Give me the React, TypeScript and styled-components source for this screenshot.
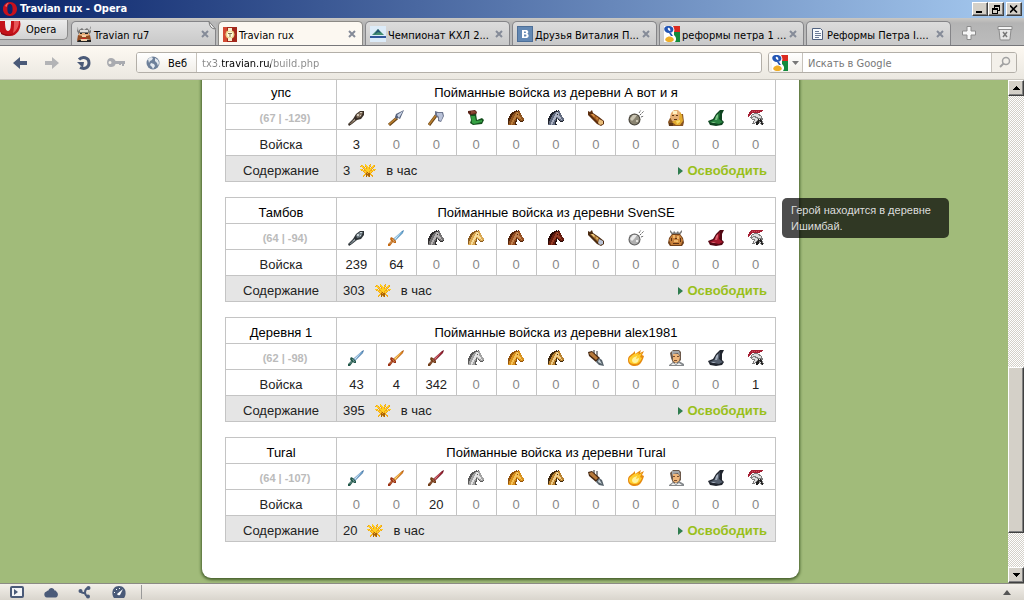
import React from "react";
import styled, { createGlobalStyle } from "styled-components";

const uiFont = `"DejaVu Sans Condensed", "DejaVu Sans", sans-serif`;
const pageFont = `"Liberation Sans", Arial, sans-serif`;

const GlobalStyle = createGlobalStyle`
  * { box-sizing: border-box; }
  body { margin: 0; font-family: ${uiFont}; font-size: 11px; color: #000; }
  button, input { font: inherit; color: inherit; margin: 0; }
  button { padding: 0; border: 0; background: none; display: flex; align-items: center; justify-content: center; }
  svg { display: block; flex: none; }
`;

const Window = styled.div`
  display: flex;
  flex-direction: column;
  height: 100vh;
  overflow: hidden;
`;

/* ---------- title bar ---------- */

const TitleBar = styled.header`
  display: flex;
  align-items: center;
  flex: none;
  height: 18px;
  padding: 0 2px 0 3px;
  background: linear-gradient(90deg, #0a246a, #a6caf0);
`;

const WindowTitle = styled.h1`
  flex: 1;
  margin: 0 0 0 3px;
  color: #fff;
  font-size: 11px;
  line-height: 18px;
  font-weight: bold;
`;

const ClassicButton = styled.button<{ $gap?: boolean }>`
  flex: none;
  width: 16px;
  height: 14px;
  margin-left: ${(p) => (p.$gap ? 2 : 0)}px;
  background: #d4d0c8;
  border: 1px solid;
  border-color: #fff #404040 #404040 #fff;
  box-shadow: inset -1px -1px #808080;
`;

/* ---------- tab strip ---------- */

const TabBar = styled.nav`
  display: flex;
  align-items: flex-end;
  flex: none;
  height: 28px;
  border-bottom: 1px solid #77777a;
  background: linear-gradient(#cac8c4, #b4b4b4 5px, #bcbcbc);
`;

const MenuButton = styled.button`
  flex: none;
  align-self: flex-start;
  width: 68px;
  height: 20px;
  margin: 2px 3px 0 0;
  gap: 4px;
  justify-content: flex-start;
  overflow: hidden;
  border: 1px solid #8a8a8a;
  border-width: 0 1px 1px 0;
  border-radius: 0 0 5px 0;
  background: linear-gradient(#ececec, #d2d2d2);
`;

const TabList = styled.div`
  display: flex;
  flex: 0 1 880px;
  min-width: 0;
  gap: 2px;
`;

const TabItem = styled.div<{ $active?: boolean }>`
  position: relative;
  display: flex;
  align-items: center;
  flex: 1 1 0;
  min-width: 0;
  height: 24px;
  padding: 1px 6px 0 4px;
  margin-bottom: ${(p) => (p.$active ? -1 : 0)}px;
  border: 1px solid ${(p) => (p.$active ? "#8c8a86" : "#858588")};
  border-bottom: 0;
  border-radius: 5px 5px 0 0;
  background: ${(p) => (p.$active ? "#fcf8f1" : "linear-gradient(#dcdcdc, #c9c9c9)")};
`;

const TabLabel = styled.button`
  flex: 1;
  min-width: 0;
  height: 23px;
  gap: 2px;
  justify-content: flex-start;
  white-space: nowrap;
`;

const TabText = styled.span`
  padding-top: 2px;
`;

const TabFold = styled.svg`
  position: absolute;
  top: -1px;
  right: -1px;
`;

const StripButton = styled.button`
  flex: none;
  width: 36px;
  height: 24px;
`;

/* ---------- toolbar ---------- */

const Toolbar = styled.div`
  display: flex;
  align-items: center;
  flex: none;
  height: 34px;
  padding: 0 7px 0 4px;
  border-bottom: 1px solid #c9c6bf;
  background: linear-gradient(#fdf9f2, #ebe8e1);
`;

const ToolButton = styled.button`
  flex: none;
  width: 32px;
  height: 24px;
`;

const Field = styled.div<{ $width?: number }>`
  display: flex;
  flex: ${(p) => (p.$width ? `0 1 ${p.$width}px` : "1 1 0")};
  min-width: 0;
  height: 21px;
  margin-left: ${(p) => (p.$width ? 6 : 4)}px;
  border: 1px solid #b3afa8;
  border-radius: 3px;
  background: #fff;
  overflow: hidden;
`;

const FieldButton = styled.button<{ $width: number; $gap?: number; $end?: boolean }>`
  flex: none;
  width: ${(p) => p.$width}px;
  gap: ${(p) => p.$gap ?? 0}px;
  border: 0 solid #c6c2bb;
  border-width: ${(p) => (p.$end ? "0 0 0 1px" : "0 1px 0 0")};
  background: ${(p) => (p.$end ? "#f3f0ea" : "linear-gradient(#fff, #f1eee8)")};
`;

const TextInput = styled.input`
  flex: 1;
  min-width: 0;
  padding: 2px 5px 0;
  border: 0;
  outline: 0;
  background: transparent;
  &::placeholder { color: #777; opacity: 1; }
`;

/* The host name is black, the rest of the address is grey. */
const AddressInput = styled(TextInput)`
  color: #000;
  -webkit-text-fill-color: transparent;
  background: linear-gradient(90deg, #888 25px, #000 25px, #000 74px, #888 74px);
  -webkit-background-clip: text;
  background-clip: text;
`;

/* ---------- page ---------- */

const Body = styled.div`
  display: flex;
  flex: 1;
  min-height: 0;
`;

const Viewport = styled.main`
  position: relative;
  display: flex;
  flex-direction: column;
  justify-content: flex-end;
  align-items: center;
  flex: 1;
  min-width: 0;
  padding: 0 7px 5px 0;
  overflow: hidden;
  background: #a1bb7a;
`;

const Panel = styled.section`
  display: flex;
  flex-direction: column;
  gap: 15px;
  width: 597px;
  max-width: 100%;
  padding: 24px 23px 36px;
  border-radius: 0 0 9px 9px;
  background: #fff;
  box-shadow: 0 1px 3px 1px #46602c;
`;

const TroopTable = styled.table`
  width: 100%;
  table-layout: fixed;
  border-collapse: collapse;
  font-family: ${pageFont};
  font-size: 13px;
  line-height: 16px;
  color: #222;
`;

const VillageCol = styled.col`
  width: 111px;
`;

const Cell = styled.td<{ $muted?: boolean }>`
  height: 26px;
  padding: 5px 0 0;
  border: 1px solid #c4c4c4;
  text-align: center;
  font-weight: normal;
  color: ${(p) => (p.$muted ? "#888" : "inherit")};
`;

const HeadCell = styled(Cell).attrs({ as: "th" })`
  color: #000;
`;

const IconCell = styled(Cell)`
  padding: 3px 0 0;
  svg { margin: 0 auto; }
`;

const Coordinates = styled(Cell)`
  padding: 3px 0 0 8px;
  font-size: 11px;
  font-weight: bold;
  color: #bbb;
`;

const UpkeepRow = styled.tr`
  background: #e5e5e5;
`;

const Upkeep = styled.div`
  display: flex;
  align-items: center;
  gap: 10px;
  padding: 0 8px 0 6px;
`;

const ReleaseLink = styled.a`
  display: flex;
  align-items: center;
  gap: 4px;
  margin-left: auto;
  font-weight: bold;
  color: #99c01a;
  text-decoration: none;
`;

const Tooltip = styled.div`
  position: absolute;
  top: 118px;
  right: 59px;
  width: 167px;
  padding: 4px 9px;
  border-radius: 5px;
  background: rgba(0, 0, 0, 0.7);
  color: #ddd;
  font-family: ${pageFont};
  font-size: 11px;
  line-height: 16px;
`;

/* ---------- scroll bar ---------- */

const ScrollBar = styled.div`
  display: flex;
  flex-direction: column;
  flex: none;
  width: 16px;
  background: repeating-conic-gradient(#d4d0c8 0 25%, #fff 0 50%) 0 0 / 2px 2px;
`;

const ScrollButton = styled(ClassicButton)`
  height: 16px;
`;

const ScrollSpace = styled.div<{ $share: number }>`
  flex: ${(p) => p.$share} 1 0;
`;

const Thumb = styled.div`
  flex: 165 1 0;
  border: 1px solid;
  border-color: #fff #404040 #404040 #fff;
  background: #d4d0c8;
  box-shadow: inset -1px -1px #808080;
`;

/* ---------- status bar ---------- */

const StatusBar = styled.footer`
  display: flex;
  align-items: center;
  flex: none;
  height: 17px;
  border-top: 1px solid #8b8b84;
  background: linear-gradient(#f3f0ea, #d9d5cd);
`;

const StatusButton = styled.button`
  flex: none;
  width: 34px;
  height: 16px;
`;

const StatusDivider = styled.span`
  width: 1px;
  height: 14px;
  margin: 0 auto 0 5px;
  background: #999;
`;

/* ---------- drawings: browser ---------- */

const OperaLogo = () => (
  <svg width="14" height="16" viewBox="0 0 14 16">
    <path fillRule="evenodd" fill="#c8101c" d="M7 1C3 1 0 4 0 8s3 7 7 7 7-3 7-7-3-7-7-7zm0 2c2 0 2.600 2.500 2.600 5S9 13 7 13 4.400 10.500 4.400 8 5 3 7 3z" />
    <path fill="#ef6a6a" d="M2 5c1-2 2-3 4-3.300C4.500 3 4 4 3.600 6z" />
  </svg>
);

const OperaMenuLogo = () => (
  <svg width="22" height="20" viewBox="0 0 22 20">
    <path fill="#c4121a" d="M0 1h20c2 7-3 15-10 15C5 16 2 14 0 12z" />
    <path fill="#e8585a" d="M14 1h5c0 6-3 10-6 12 1-4 1-8 1-12z" />
    <path fill="#8c0a10" d="M1 12c3 3 9 4 13 1-3 3-8 4-13 1z" />
    <path fill="#eee" d="M5 1h6c0 6-.5 10-3 10S5 7 5 1z" />
  </svg>
);

const CloseCross = () => (
  <svg width="8" height="8" viewBox="0 0 8 8">
    <path d="M1 1l6 6M7 1L1 7" stroke="#858b98" strokeWidth="2" />
  </svg>
);

const VikingFavicon = () => (
  <svg width="16" height="16" viewBox="0 0 16 16">
    <path fill="#777" d="M1 1l2 3 3-2 2 2 3-2 2 2 2-4v6l-2 3H3L1 5z" />
    <path fill="#ddd" d="M4 4h8v2H4zM1 1l1 4 1-1zM14 1l-1 4 2-1z" />
    <path fill="#e6ac7a" d="M3 7h10v4H3z" />
    <path fill="#222" d="M4 7h2v1H4zm5 0h3v1H9zM2 14h13v2H1z" />
    <path fill="#934c22" d="M2 9l4 1h5l3-1 1 5-5-1H6l-5 2z" />
    <path fill="#f0d0aa" d="M6 9h4v2H6zM5 13h6v2H5z" />
    <path fill="#c22" d="M6 12h4v1H6z" />
  </svg>
);

const TravianFavicon = () => (
  <svg width="14" height="15" viewBox="0 0 14 15">
    <path fill="#a3281c" d="M0 0h14v15H0z" />
    <path fill="#d34a33" d="M0 0h4v15H0z" />
    <circle cx="7" cy="7.500" r="4.500" fill="#ead48a" />
    <path fill="#f8efcd" d="M5 1h4v3H5zM5 11h4v3H5z" />
    <circle cx="7" cy="7.500" r="3" fill="#fff8dd" />
    <path fill="#80714a" d="M5 6h4v1H7.500v3h-1V7H5z" />
  </svg>
);

const KhlFavicon = () => (
  <svg width="16" height="16" viewBox="0 0 16 16">
    <path fill="#dcebf8" d="M0 0h16v16H0z" />
    <path fill="#438e6f" d="M8 3l6 6H2z" />
    <path fill="#235375" d="M8 3l3 4-3-1-4 3z" />
    <path fill="#31579a" d="M0 10h16v2H0z" />
  </svg>
);

const VkFavicon = () => (
  <svg width="16" height="16" viewBox="0 0 16 16">
    <path fill="#4d6f98" d="M0 0h16v16H0z" />
    <path fill="#6388b3" d="M1 1h14v14H1z" />
    <path fill="#fff" fillRule="evenodd" d="M5 4h4c2.500 0 3 2.800 1.300 3.700C12.500 8.600 12 12 9 12H5zm2 1.500v1.600h1.200c1.200 0 1.200-1.600 0-1.600zm0 3v2H8.500c1.300 0 1.300-2 0-2z" />
  </svg>
);

const GoogleFavicon = () => (
  <svg width="16" height="16" viewBox="0 0 16 16">
    <path fill="#fff" d="M0 0h16v16H0z" />
    <path fill="#db2a20" d="M9 0h7v6h-6c1-2 0-4-1-6z" />
    <path fill="#128a3c" d="M10 6h6v10h-5c2-3 1-5-1-7z" />
    <path fill="#2356b5" fillRule="evenodd" d="M1 1c3-2 7-1 8 1s0 5-4 5S-1 3 1 1zm3 1c-1 1 1 3 2 3S6 1 4 2z" />
    <path fill="#2356b5" d="M5 7h2l2 3H7z" />
    <path fill="#efae27" d="M2 12c2-2 5-2 7 0s0 4-3.500 4S0 14 2 12z" />
  </svg>
);

const DocumentFavicon = () => (
  <svg width="14" height="14" viewBox="0 0 14 14">
    <path fill="#f7fafd" stroke="#50617f" d="M1.500 1.500h8l2 2v9h-10z" />
    <path stroke="#6c7b97" d="M4 4.500h4M4 6.500h6M4 8.500h6M4 10.500h4" />
  </svg>
);

const PlusIcon = () => (
  <svg width="14" height="14" viewBox="0 0 14 14">
    <path fill="#f6f6f6" stroke="#8c8c8c" d="M5 .5h4V5h4.500v4H9v4.500H5V9H.5V5H5z" />
  </svg>
);

const TrashIcon = () => (
  <svg width="16" height="16" viewBox="0 0 16 16">
    <path fill="#e8e8e8" stroke="#8c8c8c" d="M2 4.500h12l-1 9.500q0 1-1 1H4q-1 0-1-1z" />
    <path fill="#f4f4f4" stroke="#8c8c8c" d="M1 1.500h14v3H1z" />
    <path stroke="#777" strokeWidth="1.500" d="M6 7l4 5M10 7l-4 5" />
  </svg>
);

const ArrowIcon = ({ color, flip }: { color: string; flip?: boolean }) => (
  <svg width="16" height="14" viewBox="0 0 16 14">
    <path fill={color} d={flip ? "M15 7L8 1v4H1v4h7v4z" : "M1 7l7-6v4h7v4H8v4z"} />
  </svg>
);

const ReloadIcon = () => (
  <svg width="16" height="16" viewBox="0 0 16 16">
    <path fill="none" stroke="#4a5a78" strokeWidth="3" d="M3 4.500C6 1 13 2 13 8c0 5-5 6.500-9 4.500" />
    <path fill="#4a5a78" d="M1 7h7l-1 6z" />
  </svg>
);

const KeyIcon = () => (
  <svg width="20" height="12" viewBox="0 0 20 12">
    <path fill="#a9abb0" fillRule="evenodd" d="M5 1c2.500 0 4 1.500 4.600 3H19v3h-1v2h-2V7h-1v1h-2V7H9.600C9 9 7.500 10 5 10 2.500 10 1 8 1 5.500S2.500 1 5 1zM4 4a1.500 1.500 0 100 3 1.500 1.500 0 000-3z" />
  </svg>
);

const GlobeIcon = () => (
  <svg width="14" height="14" viewBox="0 0 14 14">
    <circle cx="7" cy="7" r="6.500" fill="#6d809a" />
    <path fill="#e4eaf0" d="M2 3l3-2 2 1-1 2-2 1-1 2zM5 7l3 1 1 2-2 3-1-2-2-2zM9 2l3 2 1 3-1 3-1-3-2-2z" />
  </svg>
);

const DownTriangle = () => (
  <svg width="7" height="4" viewBox="0 0 7 4">
    <path fill="#777" d="M0 0h7L3.500 4z" />
  </svg>
);

const SearchIcon = () => (
  <svg width="13" height="13" viewBox="0 0 13 13">
    <circle cx="8" cy="5" r="3.500" fill="none" stroke="#a2a2a2" strokeWidth="1.500" />
    <path d="M5.500 7.500L2 11" stroke="#a2a2a2" strokeWidth="2" />
  </svg>
);

const ScrollArrow = ({ down }: { down?: boolean }) => (
  <svg width="7" height="4" viewBox="0 0 7 4" shapeRendering="crispEdges">
    <path fill="#000" d={down ? "M0 0h7L3.500 4z" : "M0 4h7L3.500 0z"} />
  </svg>
);

/* ---------- drawings: units ---------- */

type Tones = { dark: string; mid: string; light: string };

const Sprite = ({ children }: { children: React.ReactNode }) => (
  <svg width="16" height="16" viewBox="0 0 16 16">{children}</svg>
);

/* Draws a small bitmap: one letter per pixel, a dot is transparent. */
const Pixels = ({ rows, palette }: { rows: string[]; palette: Record<string, string> }) => (
  <svg width="16" height="16" viewBox="0 0 16 16" shapeRendering="crispEdges">
    {Object.entries(palette).map(([key, color]) => (
      <path
        key={key}
        fill={color}
        d={rows
          .flatMap((row, y) => [...row].map((c, x) => (c === key ? `M${x} ${y}h1v1h-1z` : "")))
          .join("")}
      />
    ))}
  </svg>
);

const horseRows = [
  "........D.D.....",
  "......DDDDMM....",
  "....DDDMLLMM....",
  "...DDDMMLLLMM...",
  "..DDDMMLLDLMM...",
  "..DDMMMLLLLMMM..",
  ".DDDMMLLLLLLMM..",
  ".DDMMMLLMMLLLMM.",
  "DDDMMLLLDMMLLMMM",
  "DDMMMLLMD.DMMLMM",
  "DDMMLLMMD..DMMMD",
  "DMMMLLMDD...DDD.",
  "DMMLLMMD........",
  "DMMLLMMD........",
  "MMMLMMMDD.......",
];

const helmetRows = [
  "...RRRRRRRRRRRR.",
  "..RRrRrRrRrRRR..",
  ".RRRRRRRRRRR....",
  ".RRR..GGGG......",
  "RRR.GGWWWWGG....",
  "RR.GWWWWWWWGG...",
  "R..GWGGGWWWWWG..",
  "..GGGWWGGGWWWG..",
  "...GWWWWWGGGGGG.",
  "....GGGWWWKWKGG.",
  "......GWWGKKKK..",
  ".....GWWGKKGKKG.",
  ".....GWGKKKGWKG.",
  "....GGG.KKK.GKKG",
  "........KK...GK.",
];

const cropRows = [
  "................",
  ".....Y....O.....",
  ".OY..YY..OY..YO.",
  "OYYO.OYY.YO.YYO.",
  "..YYO.OYYO.OYO..",
  "...OYYOYYOYYO...",
  "YYO.OYYYYYYO.OYY",
  ".OYYOOYYYYOOYYO.",
  "...OYYOYYOYYO...",
  "....OYOBYOYO....",
  ".....OBOBBO.....",
  "....YOBBBBOY....",
  "...YO.BOBB.OO...",
  "...O..B.OB..O...",
];

const Horse = ({ dark, mid, light }: Tones) => (
  <Pixels rows={horseRows} palette={{ D: dark, M: mid, L: light }} />
);

const Helmet = () => (
  <Pixels rows={helmetRows} palette={{ R: "#a51f33", r: "#cf4a5a", G: "#7c7c7c", W: "#dedede", K: "#222" }} />
);

const Crop = () => (
  <Pixels rows={cropRows} palette={{ Y: "#ffcf24", O: "#f0a318", B: "#a3620e" }} />
);

const Club = ({ dark, mid, light }: Tones) => (
  <Sprite>
    <path fill={dark} d="M0 14l5-5 3-5 4-3 4 0v4l-3 4-4 1-5 4-3 2z" />
    <path fill={mid} d="M1 14l5-4 2 0-5 4zM8 5l4-3 3 0-2 5-4 1z" />
    <path fill={light} d="M9 4h2v2H9zM12 2h2v1h-2zM12 5h1v1h-1zM3 12l4-3v1z" />
  </Sprite>
);

const Spear = () => (
  <Sprite>
    <path d="M1 15l8-7" stroke="#6b4416" strokeWidth="3" />
    <path d="M1 14.500l8-7" stroke="#c08432" strokeWidth="1.500" />
    <path fill="#56627c" d="M8 4l8-4-4 9-2-1-2 1-1-2z" />
    <path fill="#ccd6e8" d="M9 5l6-4-4 7z" />
  </Sprite>
);

const Axe = () => (
  <Sprite>
    <path d="M1 15L10 3" stroke="#6b4416" strokeWidth="3" />
    <path d="M1 14.500L9 4" stroke="#b98030" strokeWidth="1.500" />
    <path fill="#6c758e" d="M7 1l3 1 5 0 1 4-3 6-3-1 0-3-3-3z" />
    <path fill="#b9c2d8" d="M9 3l5 0 1 3-2 5-2-1 0-3-2-2z" />
  </Sprite>
);

const Boot = () => (
  <Sprite>
    <path fill="#5a2418" d="M0 1l7-1 2 2-1 3-6 0-2-2z" />
    <path fill="#8a4634" d="M3 1h4l1 2-5 1z" />
    <path fill="#14501e" d="M2 5l6-1 1 6 5-2 2 2-2 4-9 1-3-2 1-3z" />
    <path fill="#35a043" d="M3 6h4l1 5 6-1 0 2-8 2-2-1z" />
  </Sprite>
);

const Ram = ({ dark, mid, light, tip }: Tones & { tip: string }) => (
  <Sprite>
    <path fill={dark} d="M0 1l2 1 2-2 1 3 6 4 5 4v3l-3 2-4-2-7-7-2-2z" />
    <path fill={mid} d="M2 4l3 0 6 4-1 4-6-6z" />
    <path fill={light} d="M3 4l2 0 2 2-1 1zM8 7l2 1-1 2z" />
    <path fill={tip} d="M11 9l4 2v3l-3 1-2-2z" />
  </Sprite>
);

const PointedRam = () => (
  <Sprite>
    <path d="M6 0v6M9 1v6" stroke="#222" />
    <path fill="#42240f" d="M0 2l4-1 8 7-4 4-7-6z" />
    <path fill="#b5793c" d="M1 3l3-1 6 6-2 2-6-5z" />
    <path fill="#55616a" d="M11 8l3 2 2 6-5-1-3-3z" />
    <path fill="#c7d1d6" d="M11 9l3 5-4-2z" />
  </Sprite>
);

const Boulder = ({ dark, mid, light }: Tones) => (
  <Sprite>
    <circle cx="6.500" cy="9.500" r="6" fill={dark} />
    <circle cx="6.500" cy="9.500" r="4.900" fill={mid} />
    <path fill={light} d="M2 9l3-4 4 0-2 3-3 3zM8 10h2v2H8z" />
    <path stroke="#666" d="M11 3l2-3M12 5l4-4M13 7l3-1" strokeDasharray="2 1" />
  </Sprite>
);

const Fireball = () => (
  <Sprite>
    <path fill="#e68a10" d="M0 10c0-5 4-5 7-9l0 3 6-4-1 3 4-2-2 4 2 1c-2 7-5 10-9 10S0 14 0 10z" />
    <path fill="#ffce2e" d="M1 10c0-3 3-4 5-6l5-1-1 2 4-2-2 4 2 1c-2 4-4 6-7 6s-6-1-6-4z" />
    <path fill="#fff4a0" d="M4 10c1-3 3-3 5-4l-1 3 3-1c0 3-2 5-4 5s-3-1-3-3z" />
  </Sprite>
);

const TeutonChief = () => (
  <Sprite>
    <path fill="#8a5522" d="M2 8l-2 4 1 4h14l1-4-1-8-2 0z" />
    <path fill="#e5ae74" d="M3 3l3-3h4l3 3v7l-4 3-5-2-2-4z" />
    <path fill="#fff0c0" d="M5 1h4v3H5z" />
    <path fill="#e2ab2e" d="M12 2l2 3 1 6-3 4H8l-4-3 4-2 3 0z" />
    <path fill="#f8da68" d="M8 11l4-1v2l-3 2z" />
    <path fill="#5d3715" d="M4 5h2v1H4zM8 5h2v1H8zM6 9h3v1H6zM1 13h4v3H1z" />
  </Sprite>
);

const GaulChief = () => (
  <Sprite>
    <path fill="#777" d="M2 0l3 3 1-2 2 2 2-2 1 2 3-3v2l-3 4H5L2 2z" />
    <path fill="#70401a" d="M4 4h8l3 4 1 5-2 3H2l-2-3 1-5z" />
    <path fill="#c67f3a" d="M4 5h8l3 5-2 5H3l-2-5z" />
    <path fill="#f0b86c" d="M5 5h2v3H5zM9 6h2v3H9zM6 10h4v2H6z" />
    <path fill="#5d3214" d="M7 8h2v1H7zM5 13h6v1H5zM3 8h1v3H3zM12 8h1v4h-1z" />
  </Sprite>
);

const Senator = () => (
  <Sprite>
    <path fill="#6b584a" d="M2 3l3-3h6l2 2 0 8-3 3-5 0-2-5z" />
    <path fill="#a4a6a8" d="M4 1l7 0 1 3-1 2-1-3-5 1-1 3z" />
    <path fill="#eeb57a" d="M5 4h5l2 3-1 4-3 2-3-2z" />
    <path fill="#7a4c2a" d="M5 6h2v1H5zM9 6h2v1H9zM6 10h3v1H6z" />
    <path fill="#85898c" d="M1 15l4-3 3 2 3-3 5 3v2H1z" />
    <path fill="#f2f2f2" d="M3 15l2-2 3 2 3-2 3 2z" />
  </Sprite>
);

const WizardHat = ({ dark, mid, light }: Tones) => (
  <Sprite>
    <path fill={dark} d="M0 11l5-2 3-5 4-4 4 0-2 4 0 6 2 2-2 3-6 1-6-1z" />
    <path fill={mid} d="M1 12l5-2 3-5 3-3-1 7 4 3-4 2z" />
    <path fill={light} d="M8 6l2-2 0 3-1 3-2 0zM3 12l3 0 2 1-3 0z" />
  </Sprite>
);

const Sword = ({ dark, mid, light, hilt }: Tones & { hilt: string }) => (
  <Sprite>
    <path fill={dark} d="M5 9l9-8 2-1-1 3-8 8z" />
    <path fill={mid} d="M6 9l8-7 1 0-8 8z" />
    <path fill={light} d="M6 9l8-8-7 9z" />
    <path fill={hilt} d="M3 7l2 1 3 3 0 2-2 0-1-1-3 4-2 0 0-2 3-3-1-2z" />
    <path fill={light} fillOpacity=".5" d="M4 9l1 0 2 3-1 0zM1 14l3-3v1l-2 2z" />
  </Sprite>
);

const ReleaseArrow = () => (
  <svg width="5" height="8" viewBox="0 0 5 8">
    <path fill="#2f7d4f" d="M0 0l5 4-5 4z" />
  </svg>
);

const brown: Tones = { dark: "#4a2409", mid: "#8d531f", light: "#b87c3b" };
const bay: Tones = { dark: "#54250c", mid: "#965023", light: "#c0814f" };
const chestnut: Tones = { dark: "#2b0905", mid: "#641b0e", light: "#943b25" };
const steed: Tones = { dark: "#20242e", mid: "#626b7f", light: "#aab1c2" };
const dapple: Tones = { dark: "#302e2f", mid: "#757374", light: "#b4b1b1" };
const palomino: Tones = { dark: "#8b5c20", mid: "#d9a752", light: "#f7dc98" };
const white: Tones = { dark: "#5a5a5a", mid: "#a3a3a3", light: "#e2e2e2" };
const golden: Tones = { dark: "#94540b", mid: "#d8921f", light: "#f5c257" };
const buckskin: Tones = { dark: "#3f290e", mid: "#b98230", light: "#f0cc85" };

const teutons = [
  <Club dark="#3a2f27" mid="#83705d" light="#cfc4b3" />,
  <Spear />,
  <Axe />,
  <Boot />,
  <Horse {...brown} />,
  <Horse {...steed} />,
  <Ram dark="#5c2d0d" mid="#a75f20" light="#d8934a" tip="#e9bd79" />,
  <Boulder dark="#46433a" mid="#8a8471" light="#c9c4b2" />,
  <TeutonChief />,
  <WizardHat dark="#0e4420" mid="#2b8442" light="#7cc285" />,
  <Helmet />,
];

const gauls = [
  <Club dark="#2d3337" mid="#727e85" light="#c2cdd2" />,
  <Sword dark="#4b87b5" mid="#86bfe4" light="#d5eefc" hilt="#c66a12" />,
  <Horse {...dapple} />,
  <Horse {...palomino} />,
  <Horse {...bay} />,
  <Horse {...chestnut} />,
  <Ram dark="#4a2a10" mid="#b07a35" light="#f0ce85" tip="#b9c3d6" />,
  <Boulder dark="#606060" mid="#b0b0b0" light="#ececec" />,
  <GaulChief />,
  <WizardHat dark="#510713" mid="#a5182c" light="#d9606c" />,
  <Helmet />,
];

const romans = [
  <Sword dark="#4878a5" mid="#84b5df" light="#d3e9fa" hilt="#24584a" />,
  <Sword dark="#b55b12" mid="#f0a02c" light="#ffdf78" hilt="#9c3318" />,
  <Sword dark="#6b1220" mid="#b02a3b" light="#dd7b80" hilt="#71401a" />,
  <Horse {...white} />,
  <Horse {...golden} />,
  <Horse {...buckskin} />,
  <PointedRam />,
  <Fireball />,
  <Senator />,
  <WizardHat dark="#20252e" mid="#56606f" light="#a3adbb" />,
  <Helmet />,
];

/* ---------- data ---------- */

const villages = [
  { name: "упс", coords: "(67 | -129)", from: "А вот и я", units: teutons, counts: [3, 0, 0, 0, 0, 0, 0, 0, 0, 0, 0], upkeep: 3 },
  { name: "Тамбов", coords: "(64 | -94)", from: "SvenSE", units: gauls, counts: [239, 64, 0, 0, 0, 0, 0, 0, 0, 0, 0], upkeep: 303 },
  { name: "Деревня 1", coords: "(62 | -98)", from: "alex1981", units: romans, counts: [43, 4, 342, 0, 0, 0, 0, 0, 0, 0, 1], upkeep: 395 },
  { name: "Tural", coords: "(64 | -107)", from: "Tural", units: romans, counts: [0, 0, 20, 0, 0, 0, 0, 0, 0, 0, 0], upkeep: 20 },
];

const tabs = [
  { title: "Travian ru7", icon: <VikingFavicon />, folded: true },
  { title: "Travian rux", icon: <TravianFavicon />, active: true },
  { title: "Чемпионат КХЛ 2...", icon: <KhlFavicon /> },
  { title: "Друзья Виталия П...", icon: <VkFavicon /> },
  { title: "реформы петра 1 ...", icon: <GoogleFavicon /> },
  { title: "Реформы Петра I....", icon: <DocumentFavicon /> },
];

const Village = ({ name, coords, from, units, counts, upkeep }: (typeof villages)[number]) => (
  <TroopTable>
    <colgroup>
      <VillageCol />
      {units.map((_, i) => <col key={i} />)}
    </colgroup>
    <thead>
      <tr>
        <HeadCell scope="col">{name}</HeadCell>
        <HeadCell scope="colgroup" colSpan={11}>Пойманные войска из деревни {from}</HeadCell>
      </tr>
    </thead>
    <tbody>
      <tr>
        <Coordinates>{coords}</Coordinates>
        {units.map((unit, i) => <IconCell key={i}>{unit}</IconCell>)}
      </tr>
      <tr>
        <Cell as="th" scope="row">Войска</Cell>
        {counts.map((n, i) => <Cell key={i} $muted={n === 0}>{n}</Cell>)}
      </tr>
      <UpkeepRow>
        <Cell as="th" scope="row">Содержание</Cell>
        <Cell colSpan={11}>
          <Upkeep>
            <span>{upkeep}</span>
            <Crop />
            <span>в час</span>
            <ReleaseLink href="#"><ReleaseArrow />Освободить</ReleaseLink>
          </Upkeep>
        </Cell>
      </UpkeepRow>
    </tbody>
  </TroopTable>
);

export default function App() {
  return (
    <Window>
      <GlobalStyle />
      <TitleBar>
        <OperaLogo />
        <WindowTitle>Travian rux - Opera</WindowTitle>
        <ClassicButton aria-label="Свернуть">
          <svg width="8" height="8" viewBox="0 0 8 8"><path d="M0 6h6v2H0z" /></svg>
        </ClassicButton>
        <ClassicButton aria-label="Восстановить">
          <svg width="9" height="9" viewBox="0 0 9 9" shapeRendering="crispEdges">
            <path fillRule="evenodd" d="M2 0h6v6H6V5h1V2H3v1H2zM0 3h6v6H0zm1 2v3h4V5z" />
          </svg>
        </ClassicButton>
        <ClassicButton $gap aria-label="Закрыть">
          <svg width="8" height="8" viewBox="0 0 8 8"><path d="M0 .5l7 7M7 .5l-7 7" stroke="#000" strokeWidth="1.600" /></svg>
        </ClassicButton>
      </TitleBar>

      <TabBar>
        <MenuButton><OperaMenuLogo />Opera</MenuButton>
        <TabList role="tablist">
          {tabs.map((t) => (
            <TabItem key={t.title} $active={t.active}>
              <TabLabel role="tab" aria-selected={!!t.active}>{t.icon}<TabText>{t.title}</TabText></TabLabel>
              <button aria-label="Закрыть вкладку"><CloseCross /></button>
              {t.folded && (
                <TabFold width="8" height="9" viewBox="0 0 8 9">
                  <path fill="#b8b8b8" d="M1 0h7v9z" />
                  <path fill="#f2f2f2" stroke="#777" d="M1 .5l6.500 7.500q-6 0-6.500-7.500z" />
                </TabFold>
              )}
            </TabItem>
          ))}
        </TabList>
        <StripButton aria-label="Новая вкладка"><PlusIcon /></StripButton>
        <StripButton aria-label="Закрытые вкладки"><TrashIcon /></StripButton>
      </TabBar>

      <Toolbar>
        <ToolButton aria-label="Назад"><ArrowIcon color="#4a5a78" /></ToolButton>
        <ToolButton aria-label="Вперёд"><ArrowIcon color="#b3b4b6" flip /></ToolButton>
        <ToolButton aria-label="Обновить"><ReloadIcon /></ToolButton>
        <ToolButton aria-label="Пароли"><KeyIcon /></ToolButton>
        <Field>
          <FieldButton $width={60} $gap={8}><GlobeIcon /><TabText>Веб</TabText></FieldButton>
          <AddressInput aria-label="Адрес" defaultValue="tx3.travian.ru/build.php" />
        </Field>
        <Field $width={249}>
          <FieldButton $width={34} $gap={4} aria-label="Поисковая система"><GoogleFavicon /><DownTriangle /></FieldButton>
          <TextInput aria-label="Поиск" placeholder="Искать в Google" />
          <FieldButton $width={25} $end aria-label="Найти"><SearchIcon /></FieldButton>
        </Field>
      </Toolbar>

      <Body>
        <Viewport>
          <Panel>
            {villages.map((v) => <Village key={v.name} {...v} />)}
          </Panel>
          <Tooltip role="tooltip">Герой находится в деревне Ишимбай.</Tooltip>
        </Viewport>
        <ScrollBar>
          <ScrollButton aria-label="Прокрутить вверх"><ScrollArrow /></ScrollButton>
          <ScrollSpace $share={272} />
          <Thumb />
          <ScrollSpace $share={34} />
          <ScrollButton aria-label="Прокрутить вниз"><ScrollArrow down /></ScrollButton>
        </ScrollBar>
      </Body>

      <StatusBar>
        <StatusButton aria-label="Панели">
          <svg width="14" height="12" viewBox="0 0 14 12">
            <rect x="1" y="1" width="12" height="10" rx="1" fill="#f3f4f6" stroke="#4a5a78" strokeWidth="2" />
            <path fill="#4a5a78" d="M4 3l4 3-4 3z" />
          </svg>
        </StatusButton>
        <StatusButton aria-label="Opera Link">
          <svg width="14" height="11" viewBox="0 0 14 11">
            <path fill="#4a5a78" d="M3 10.500C-.5 10.500-.5 5 2.500 4.500 3 3.500 4 3.500 4.500 3.500 5 0 10 0 10.500 3.500c2-.5 2 1 2 1.500 2 .5 2 5.500-1 5.500z" />
          </svg>
        </StatusButton>
        <StatusButton aria-label="Opera Unite">
          <svg width="14" height="13" viewBox="0 0 14 13">
            <path fill="none" stroke="#4a5a78" strokeWidth="2" d="M2 5q3 3 5 1.500Q7 3 10 2M7 6.500q0 3 3 4" />
            <circle cx="10.500" cy="2" r="2" fill="#4a5a78" />
            <circle cx="2.500" cy="5" r="2" fill="#4a5a78" />
            <circle cx="10" cy="10.500" r="2" fill="#4a5a78" />
          </svg>
        </StatusButton>
        <StatusButton aria-label="Opera Turbo">
          <svg width="14" height="12" viewBox="0 0 14 12">
            <path fill="#4a5a78" d="M2 12C-1 8 0 0 7 0s8 8 5 12z" />
            <path fill="#fff" d="M11 3L8 9q-2 1-3-1z" />
            <path fill="#fff" d="M2 6h1v1H2zM4 3h1v1H4zM7 2h1v1H7z" />
          </svg>
        </StatusButton>
        <StatusDivider />
        <StatusButton aria-label="Масштаб">
          <svg width="8" height="5" viewBox="0 0 8 5"><path fill="#555" d="M0 5l4-5 4 5z" /></svg>
        </StatusButton>
      </StatusBar>
    </Window>
  );
}
